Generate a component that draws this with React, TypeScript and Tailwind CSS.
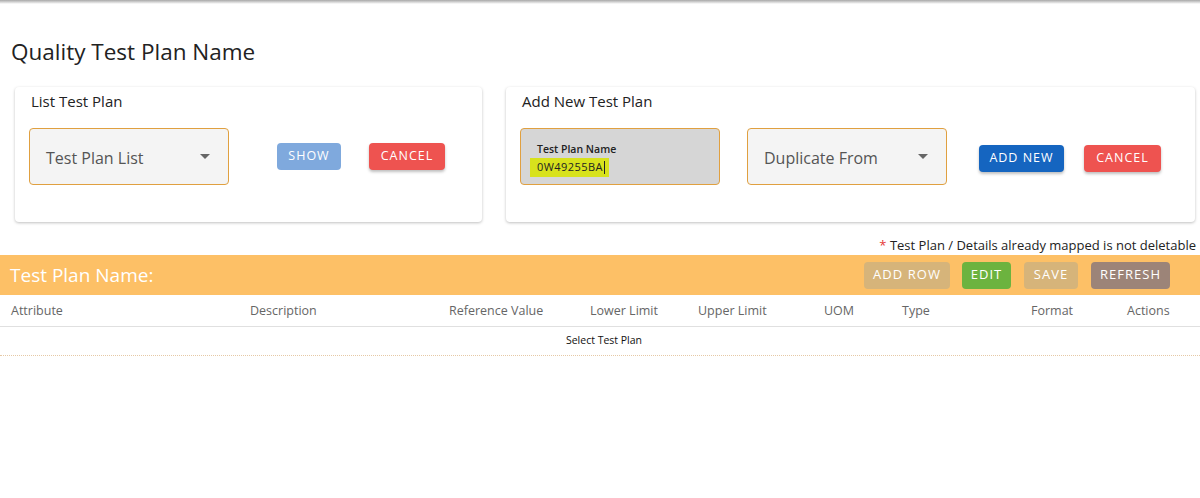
import React from "react";

const font = { fontFamily: '"Open Sans", "Noto Sans", sans-serif' };

const columns = [
  "Attribute",
  "Description",
  "Reference Value",
  "Lower Limit",
  "Upper Limit",
  "UOM",
  "Type",
  "Format",
  "Actions",
];

function Caret() {
  return (
    <svg width="10" height="5" viewBox="0 0 10 5" className="fill-[#666]">
      <path d="M0 0 L10 0 L5 5 Z" />
    </svg>
  );
}

function SelectBox({ label }: { label: string }) {
  return (
    <div className="flex h-[57px] w-[200px] items-center justify-between rounded border border-[#e0a040] bg-[#f4f4f4] pl-[16px] pr-[18px]">
      <span className="mt-[2px] text-[16px] text-[#555]">{label}</span>
      <Caret />
    </div>
  );
}

function Btn({
  children,
  className,
}: {
  children: React.ReactNode;
  className: string;
}) {
  return (
    <button
      className={`flex h-[27px] items-center justify-center rounded text-[12.5px] tracking-[0.08em] text-white ${className}`}
    >
      {children}
    </button>
  );
}

export default function App() {
  return (
    <div className="min-h-[498px] w-[1200px] bg-white" style={font}>
      {/* top app bar shadow */}
      <div className="h-[4px] bg-gradient-to-b from-[#a8a8a8] to-white" />

      <h1 className="ml-[11px] mt-[33px] text-[22.5px] leading-[30px] text-[#222]">
        Quality Test Plan Name
      </h1>

      {/* cards */}
      <div className="mt-[20px] flex gap-[24px] pl-[15px]">
        <div className="h-[135px] w-[467px] rounded bg-white shadow-[0_1px_3px_rgba(0,0,0,0.25)]">
          <div className="ml-[16px] mt-[4px] text-[15px] leading-[20px] text-[#222]">
            List Test Plan
          </div>
          <div className="mt-[17px] flex items-center pl-[14px]">
            <SelectBox label="Test Plan List" />
            <Btn className="ml-[48px] w-[64px] bg-[#7fa9dd]">SHOW</Btn>
            <Btn className="ml-[28px] w-[76px] bg-[#ee5350] shadow-[0_2px_3px_rgba(0,0,0,0.25)]">
              CANCEL
            </Btn>
          </div>
        </div>

        <div className="h-[135px] w-[689px] rounded bg-white shadow-[0_1px_3px_rgba(0,0,0,0.25)]">
          <div className="ml-[16px] mt-[4px] text-[15px] leading-[20px] text-[#222]">
            Add New Test Plan
          </div>
          <div className="mt-[17px] flex items-center pl-[14px]">
            <div className="flex h-[57px] w-[200px] flex-col rounded border border-[#e0a040] bg-[#d6d6d6] pl-[9px] pt-[13px]">
              <span className="ml-[7px] text-[10.5px] font-semibold leading-[14px] text-[#222]">
                Test Plan Name
              </span>
              <span className="mt-[2px] flex h-[19px] w-[79px] items-center bg-[#d8e21c] pl-[7px] text-[11px] tracking-[0.04em] text-[#222]">
                0W49255BA
                <span className="ml-px h-[13px] w-px bg-[#222]" />
              </span>
            </div>
            <div className="ml-[27px]">
              <SelectBox label="Duplicate From" />
            </div>
            <Btn className="ml-[32px] mt-[4px] w-[85px] bg-[#1565c0] shadow-[0_2px_3px_rgba(0,0,0,0.25)]">
              ADD NEW
            </Btn>
            <Btn className="ml-[20px] mt-[4px] w-[77px] bg-[#ee5350] shadow-[0_2px_3px_rgba(0,0,0,0.25)]">
              CANCEL
            </Btn>
          </div>
        </div>
      </div>

      {/* note */}
      <div className="mt-[14px] pr-[4px] text-right text-[13px] leading-[19px] text-[#222]">
        <span className="text-[#e53935]">*</span> Test Plan / Details already
        mapped is not deletable
      </div>

      {/* orange header bar */}
      <div className="flex h-[40px] items-center bg-[#fdc066] pl-[10px] pr-[30px]">
        <span className="text-[19px] text-white">Test Plan Name:</span>
        <div className="ml-auto flex items-center">
          <Btn className="w-[86px] bg-[#d6b47a] text-[13px] text-[#f2dfb8]">ADD ROW</Btn>
          <Btn className="ml-[12px] w-[49px] bg-[#6cb33f] text-[13px]">EDIT</Btn>
          <Btn className="ml-[13px] w-[54px] bg-[#d6b47a] text-[13px] text-[#f2dfb8]">SAVE</Btn>
          <Btn className="ml-[13px] w-[79px] bg-[#9c8478] text-[13px]">REFRESH</Btn>
        </div>
      </div>

      {/* table */}
      <div className="grid h-[32px] grid-cols-[239px_199px_141px_108px_126px_78px_129px_96px_1fr] items-center border-b border-[#e0e0e0] px-[11px] text-[12.5px] text-[#666]">
        {columns.map((c) => (
          <span key={c} className="mt-[2px]">
            {c}
          </span>
        ))}
      </div>
      <div className="flex h-[29px] items-center justify-center border-b border-dotted border-[#e6c9a6] pl-[8px] text-[10.5px] text-[#111]">
        Select Test Plan
      </div>
    </div>
  );
}
